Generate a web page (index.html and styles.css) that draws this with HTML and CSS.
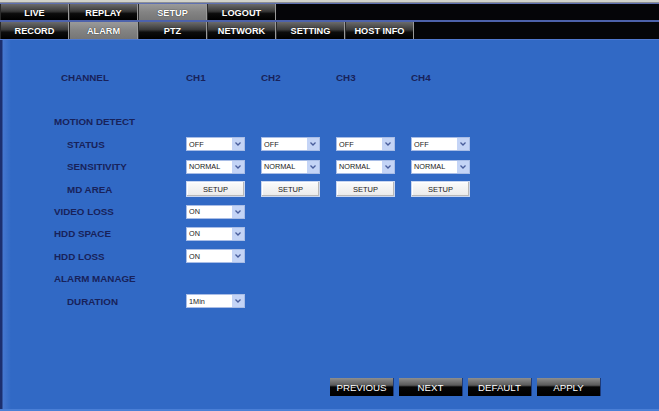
FILE: index.html
```html
<!DOCTYPE html>
<html>
<head>
<meta charset="utf-8">
<link rel="stylesheet" href="styles.css">
</head>
<body>
<div class="app">
  <div class="topstrip"></div>
  <nav class="tabs tabs-main">
    <div class="tab">LIVE</div>
    <div class="tab">REPLAY</div>
    <div class="tab active">SETUP</div>
    <div class="tab">LOGOUT</div>
  </nav>
  <nav class="tabs tabs-sub">
    <div class="tab">RECORD</div>
    <div class="tab active">ALARM</div>
    <div class="tab">PTZ</div>
    <div class="tab">NETWORK</div>
    <div class="tab">SETTING</div>
    <div class="tab">HOST INFO</div>
  </nav>
  <main class="content">
    <div class="grid">
      <div class="lbl l1">CHANNEL</div>
      <div class="hdr">CH1</div><div class="hdr">CH2</div><div class="hdr">CH3</div><div class="hdr">CH4</div>

      <div class="lbl spacer"></div>

      <div class="lbl l0 full">MOTION DETECT</div>

      <div class="lbl l2">STATUS</div>
      <div class="cell"><div class="select"><span>OFF</span><span class="arrow"><svg width="6" height="4" viewBox="0 0 6 4"><path d="M0.5 0.5 L3 3 L5.5 0.5" fill="none" stroke="#4a5e9c" stroke-width="1.3"/></svg></span></div></div>
      <div class="cell"><div class="select"><span>OFF</span><span class="arrow"><svg width="6" height="4" viewBox="0 0 6 4"><path d="M0.5 0.5 L3 3 L5.5 0.5" fill="none" stroke="#4a5e9c" stroke-width="1.3"/></svg></span></div></div>
      <div class="cell"><div class="select"><span>OFF</span><span class="arrow"><svg width="6" height="4" viewBox="0 0 6 4"><path d="M0.5 0.5 L3 3 L5.5 0.5" fill="none" stroke="#4a5e9c" stroke-width="1.3"/></svg></span></div></div>
      <div class="cell"><div class="select"><span>OFF</span><span class="arrow"><svg width="6" height="4" viewBox="0 0 6 4"><path d="M0.5 0.5 L3 3 L5.5 0.5" fill="none" stroke="#4a5e9c" stroke-width="1.3"/></svg></span></div></div>

      <div class="lbl l2">SENSITIVITY</div>
      <div class="cell"><div class="select"><span>NORMAL</span><span class="arrow"><svg width="6" height="4" viewBox="0 0 6 4"><path d="M0.5 0.5 L3 3 L5.5 0.5" fill="none" stroke="#4a5e9c" stroke-width="1.3"/></svg></span></div></div>
      <div class="cell"><div class="select"><span>NORMAL</span><span class="arrow"><svg width="6" height="4" viewBox="0 0 6 4"><path d="M0.5 0.5 L3 3 L5.5 0.5" fill="none" stroke="#4a5e9c" stroke-width="1.3"/></svg></span></div></div>
      <div class="cell"><div class="select"><span>NORMAL</span><span class="arrow"><svg width="6" height="4" viewBox="0 0 6 4"><path d="M0.5 0.5 L3 3 L5.5 0.5" fill="none" stroke="#4a5e9c" stroke-width="1.3"/></svg></span></div></div>
      <div class="cell"><div class="select"><span>NORMAL</span><span class="arrow"><svg width="6" height="4" viewBox="0 0 6 4"><path d="M0.5 0.5 L3 3 L5.5 0.5" fill="none" stroke="#4a5e9c" stroke-width="1.3"/></svg></span></div></div>

      <div class="lbl l2">MD AREA</div>
      <div class="cell"><div class="btn-setup">SETUP</div></div>
      <div class="cell"><div class="btn-setup">SETUP</div></div>
      <div class="cell"><div class="btn-setup">SETUP</div></div>
      <div class="cell"><div class="btn-setup">SETUP</div></div>

      <div class="lbl l0">VIDEO LOSS</div>
      <div class="cell rowend"><div class="select"><span>ON</span><span class="arrow"><svg width="6" height="4" viewBox="0 0 6 4"><path d="M0.5 0.5 L3 3 L5.5 0.5" fill="none" stroke="#4a5e9c" stroke-width="1.3"/></svg></span></div></div>

      <div class="lbl l0">HDD SPACE</div>
      <div class="cell rowend"><div class="select"><span>ON</span><span class="arrow"><svg width="6" height="4" viewBox="0 0 6 4"><path d="M0.5 0.5 L3 3 L5.5 0.5" fill="none" stroke="#4a5e9c" stroke-width="1.3"/></svg></span></div></div>

      <div class="lbl l0">HDD LOSS</div>
      <div class="cell rowend"><div class="select"><span>ON</span><span class="arrow"><svg width="6" height="4" viewBox="0 0 6 4"><path d="M0.5 0.5 L3 3 L5.5 0.5" fill="none" stroke="#4a5e9c" stroke-width="1.3"/></svg></span></div></div>

      <div class="lbl l0 full">ALARM MANAGE</div>

      <div class="lbl l2">DURATION</div>
      <div class="cell rowend"><div class="select"><span>1Min</span><span class="arrow"><svg width="6" height="4" viewBox="0 0 6 4"><path d="M0.5 0.5 L3 3 L5.5 0.5" fill="none" stroke="#4a5e9c" stroke-width="1.3"/></svg></span></div></div>
    </div>

    <div class="footer">
      <div class="fbtn">PREVIOUS</div>
      <div class="fbtn">NEXT</div>
      <div class="fbtn">DEFAULT</div>
      <div class="fbtn">APPLY</div>
    </div>
  </main>
</div>
</body>
</html>
```

FILE: styles.css
```css
* { box-sizing: border-box; }
html, body { margin: 0; padding: 0; }
body {
  width: 659px;
  height: 411px;
  overflow: hidden;
  background: #3169c5;
  font-family: "Liberation Sans", Arial, sans-serif;
}
.app {
  display: flex;
  flex-direction: column;
  width: 659px;
  height: 411px;
}
.topstrip {
  height: 3px;
  background: #d2d3cb;
  border-bottom: 1px solid #8c8f94;
}
.tabs {
  display: flex;
  background: #050508;
}
.tabs-main {
  height: 19px;
  border-top: 1px solid #5e70b2;
  border-bottom: 2px solid #4d62ab;
}
.tabs-sub {
  height: 18px;
  border-bottom: 1px solid #4f78cf;
}
.tab {
  width: 69px;
  height: 100%;
  display: flex;
  align-items: center;
  justify-content: center;
  padding-top: 1px;
  color: #ffffff;
  font-weight: bold;
  font-size: 9.2px;
  background: linear-gradient(#6b6b6b 0%, #3a3a3a 45%, #0c0c0c 60%, #000 100%);
  border-right: 1px solid #9a9a9a;
  border-left: 1px solid #2a2a2a;
  text-shadow: 0 0 1px #000;
}
.tab.active {
  background: linear-gradient(#9a9a9a 0%, #838383 50%, #767676 100%);
}
.content {
  flex: 1;
  display: flex;
  flex-direction: column;
  background: linear-gradient(to right, #1c2f6e 0, #1c2f6e 2px, #4577cf 3px, #3169c5 11px);
  border-bottom: 2px solid #4a7fd6;
  padding: 26px 0 13px 0;
}
.grid {
  display: grid;
  grid-template-columns: 186px 75px 75px 75px 75px;
  grid-auto-rows: 22.4px;
  align-items: center;
}
.lbl {
  grid-column: 1;
  color: #18225a;
  font-weight: bold;
  font-size: 9.8px;
  white-space: nowrap;
}
.l0 { padding-left: 54px; }
.l1 { padding-left: 61px; }
.l2 { padding-left: 67px; }
.full { grid-column: 1 / -1; }
.spacer { grid-column: 1 / -1; }
.hdr {
  color: #18225a;
  font-weight: bold;
  font-size: 9.8px;
}
.rowend { grid-column: 2; }
.cell { display: flex; align-items: center; }
.select {
  width: 59px;
  height: 14px;
  background: #ffffff;
  border: 1px solid #a9bde6;
  display: flex;
  align-items: center;
  justify-content: space-between;
  padding-left: 2px;
  font-size: 7.3px;
  color: #1a1a1a;
}
.arrow {
  width: 12px;
  height: 12px;
  background: #c4d4f6;
  display: flex;
  align-items: center;
  justify-content: center;
}
.arrow svg { display: block; }
.btn-setup {
  width: 59px;
  height: 16px;
  background: linear-gradient(#fbfbfb, #eaeaea);
  border: 1px solid #c9d6f0;
  box-shadow: inset -1px -1px 0 #b8b8b8, inset 1px 1px 0 #ffffff;
  display: flex;
  align-items: center;
  justify-content: center;
  font-size: 7.5px;
  color: #1a1a1a;
}
.footer {
  margin-top: auto;
  display: flex;
  justify-content: flex-end;
  gap: 5px;
  padding-right: 58px;
}
.fbtn {
  width: 64px;
  height: 18px;
  display: flex;
  align-items: center;
  justify-content: center;
  color: #ffffff;
  font-size: 9.7px;
  background: linear-gradient(#8e8e8e 0%, #5a5a5a 40%, #050505 50%, #000 100%);
  border-right: 1px solid #1d3b7a;
}
```
